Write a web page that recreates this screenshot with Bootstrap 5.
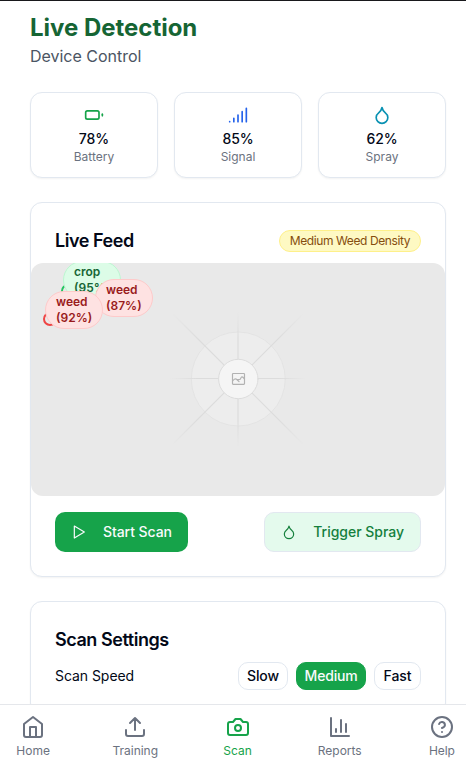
<!DOCTYPE html>
<html lang="en">
<head>
<meta charset="utf-8">
<meta name="viewport" content="width=device-width, initial-scale=1">
<title>Live Detection</title>
<link href="https://cdn.jsdelivr.net/npm/bootstrap@5.3.0/dist/css/bootstrap.min.css" rel="stylesheet">
<style>
body{font-family:Inter,sans-serif;color:#020817;height:766px;overflow:hidden;background:#fff;border-top:1px solid #18181b}
svg{display:block;fill:none;stroke:currentColor;stroke-width:2;stroke-linecap:round;stroke-linejoin:round;flex:none}
.page{padding:11px 20px 0 30px}
.title{font-size:24px;line-height:32px;font-weight:700;color:#166534;letter-spacing:-.02px}
.subtitle{font-size:16px;line-height:24px;color:#4b5563;letter-spacing:-.02px}
.panel{border:1px solid #e2e8f0;border-radius:12px;background:#fff;box-shadow:0 1px 2px rgba(0,0,0,.05)}
.stat{padding:12px}
.value{font-size:14px;line-height:20px;font-weight:500;letter-spacing:-.05px}
.caption{font-size:12px;line-height:16px;color:#6b7280}
.heading{font-size:18px;line-height:28px;font-weight:600;letter-spacing:-.45px}
.density{font-size:12px;line-height:16px;font-weight:400;padding:2px 10px;border:1px solid #fef08a;background:#fef9c3;color:#854d0e;letter-spacing:-.4px}
.feed{height:233px;border-radius:12px;background:#e9e9e9}
.tag{position:absolute;width:57.5px;height:38px;padding:2px 10px;border:1px solid #fecaca;border-radius:19px;background:#fee2e2;color:#991b1b;font-size:12px;line-height:16px;font-weight:600}
.tag-crop{left:32px;top:-2px;border-color:#bbf7d0;background:#dcfce7;color:#166534}
.tag-right{left:64px;top:16px}
.tag-left{left:14px;top:28px}
.ring{position:absolute;border:2px solid #ef4444;border-radius:50%;width:14px;height:14px;left:12px;top:49px}
.ring-crop{border-color:#22c55e;left:30px;top:21px}
.action{height:40px;padding:0 16px;gap:16px;border-radius:10px;font-size:14px;font-weight:500;line-height:20px;letter-spacing:-.07px;--bs-btn-color:#f8fafc;--bs-btn-bg:#16a34a;--bs-btn-border-color:#16a34a}
.action svg{stroke-width:1.8}
.action-start{border:0}
.action-spray{letter-spacing:-.02px;--bs-btn-color:#15803d;--bs-btn-bg:#e4faed;--bs-btn-border-color:#e2e8f0}
.speed{width:50px;height:28px;padding:0;border-radius:10px;font-size:14px;font-weight:500;line-height:20px;letter-spacing:-.1px;--bs-btn-color:#020817;--bs-btn-bg:#fff;--bs-btn-border-color:#e2e8f0}
.speed-on{width:70px;letter-spacing:-.2px;--bs-btn-color:#f8fafc;--bs-btn-bg:#16a34a;--bs-btn-border-color:#16a34a}
.speed-fast{width:47px}
.tabs{height:62px;padding-top:10px;margin:0 -27px 0 -18px;border-top:1px solid #e5e7eb;background:#fff;color:#6b7280;font-size:12px;line-height:16px;letter-spacing:-.03px}
.tabs a{color:inherit;gap:4px;flex:1 1 0}
.tabs a.current{color:#16a34a}
</style>
</head>
<body>
<main class="page">
  <header class="mb-4">
    <h1 class="title m-0">Live Detection</h1>
    <p class="subtitle m-0">Device Control</p>
  </header>
  <section class="d-flex gap-3 mb-4">
    <div class="panel stat flex-fill w-100 d-flex flex-column align-items-center">
      <svg class="mb-1" width="20" height="20" viewBox="0 0 24 24" color="#16a34a"><rect x="2" y="7" width="16" height="10" rx="2"/><path d="M22 11v2"/></svg>
      <span class="value">78%</span><span class="caption">Battery</span>
    </div>
    <div class="panel stat flex-fill w-100 d-flex flex-column align-items-center">
      <svg class="mb-1" width="20" height="20" viewBox="0 0 24 24" color="#2563eb"><path d="M2 20h.01M7 20v-4M12 20v-8M17 20V8M22 4v16"/></svg>
      <span class="value">85%</span><span class="caption">Signal</span>
    </div>
    <div class="panel stat flex-fill w-100 d-flex flex-column align-items-center">
      <svg class="mb-1" width="20" height="20" viewBox="0 0 24 24" color="#0891b2"><path d="M12 22a7 7 0 0 0 7-7c0-2-1-3.900-3-5.500s-3.500-4-4-6.500c-.5 2.500-2 4.900-4 6.500C6 11.100 5 13 5 15a7 7 0 0 0 7 7z"/></svg>
      <span class="value">62%</span><span class="caption">Spray</span>
    </div>
  </section>
  <section class="panel mb-4">
    <div class="d-flex justify-content-between align-items-center px-4 pt-4 pb-2">
      <h2 class="heading m-0">Live Feed</h2>
      <span class="badge rounded-pill density">Medium Weed Density</span>
    </div>
    <div class="feed position-relative overflow-hidden">
      <svg width="414" height="233" viewBox="0 0 414 233">
        <defs>
          <radialGradient id="fade" gradientUnits="userSpaceOnUse" cx="207" cy="116.500" r="68"><stop offset=".6" stop-color="#dcdcdc"/><stop offset="1" stop-color="#dcdcdc" stop-opacity="0"/></radialGradient>
          <radialGradient id="fadeDiagonal" gradientUnits="userSpaceOnUse" cx="207" cy="116.500" r="94"><stop offset=".6" stop-color="#dcdcdc"/><stop offset="1" stop-color="#dcdcdc" stop-opacity="0"/></radialGradient>
        </defs>
        <circle cx="207.300" cy="116" r="47" fill="#ededed" stroke="#e3e3e3" stroke-width="1"/>
        <path d="M207 48v136.010l.01-.010M139 115.500h136l.01.010" stroke="url(#fade)" stroke-width="1.200"/>
        <path d="M142 51l130 130M272 51l-130 130" stroke="url(#fadeDiagonal)" stroke-width="1.200"/>
        <circle cx="207.300" cy="116" r="19.700" fill="#f5f5f5" stroke="#dcdcdc" stroke-width="1"/>
        <g stroke="#b2b2b2" stroke-width="1.200"><rect x="201.500" y="110.500" width="12" height="10.800" rx=".7"/><path d="M202 117.500q2-2.500 3.500-1.300l2.500 2.300M206.500 116.500h2.500l1.500-2.500q1.500-.5 2.700 1.800"/></g>
      </svg>
      <span class="ring ring-crop"></span><span class="tag tag-crop">crop (95%)</span>
      <span class="tag tag-right">weed (87%)</span>
      <span class="ring"></span><span class="tag tag-left">weed (92%)</span>
    </div>
    <div class="d-flex justify-content-between px-4 pt-3 pb-4">
      <button class="btn action action-start d-flex align-items-center"><svg width="16" height="16" viewBox="0 0 24 24"><path d="M5 3l15 9-15 9z"/></svg>Start Scan</button>
      <button class="btn action action-spray d-flex align-items-center"><svg width="16" height="16" viewBox="0 0 24 24"><path d="M12 22a7 7 0 0 0 7-7c0-2-1-3.900-3-5.500s-3.500-4-4-6.500c-.5 2.500-2 4.900-4 6.500C6 11.100 5 13 5 15a7 7 0 0 0 7 7z"/></svg>Trigger Spray</button>
    </div>
  </section>
  <section class="panel p-4">
    <h2 class="heading mb-2">Scan Settings</h2>
    <div class="d-flex justify-content-between align-items-center">
      <span class="value fw-normal">Scan Speed</span>
      <div class="d-flex gap-2">
        <button class="btn speed">Slow</button>
        <button class="btn speed speed-on">Medium</button>
        <button class="btn speed speed-fast">Fast</button>
      </div>
    </div>
  </section>
</main>
<nav class="tabs fixed-bottom d-flex">
  <a class="d-flex flex-column align-items-center text-decoration-none"><svg width="24" height="24" viewBox="0 0 24 24"><path d="M3 9l9-7 9 7v11a2 2 0 0 1-2 2H5a2 2 0 0 1-2-2z"/><path d="M9 22V12h6v10"/></svg>Home</a>
  <a class="d-flex flex-column align-items-center text-decoration-none"><svg width="24" height="24" viewBox="0 0 24 24"><path d="M21 15v4a2 2 0 0 1-2 2H5a2 2 0 0 1-2-2v-4M17 8l-5-5-5 5M12 3v12"/></svg>Training</a>
  <a class="current d-flex flex-column align-items-center text-decoration-none"><svg width="24" height="24" viewBox="0 0 24 24"><path d="M14.500 4h-5L7 7H4a2 2 0 0 0-2 2v9a2 2 0 0 0 2 2h16a2 2 0 0 0 2-2V9a2 2 0 0 0-2-2h-3z"/><circle cx="12" cy="13" r="3"/></svg>Scan</a>
  <a class="d-flex flex-column align-items-center text-decoration-none"><svg width="24" height="24" viewBox="0 0 24 24"><path d="M3 3v18h18M13 17V5M18 17V9M8 17v-3"/></svg>Reports</a>
  <a class="d-flex flex-column align-items-center text-decoration-none"><svg width="24" height="24" viewBox="0 0 24 24"><circle cx="12" cy="12" r="10"/><path d="M9.090 9a3 3 0 0 1 5.830 1c0 2-3 3-3 3M12 17h.01"/></svg>Help</a>
</nav>
<script src="https://cdn.jsdelivr.net/npm/bootstrap@5.3.0/dist/js/bootstrap.bundle.min.js"></script>
</body>
</html>
